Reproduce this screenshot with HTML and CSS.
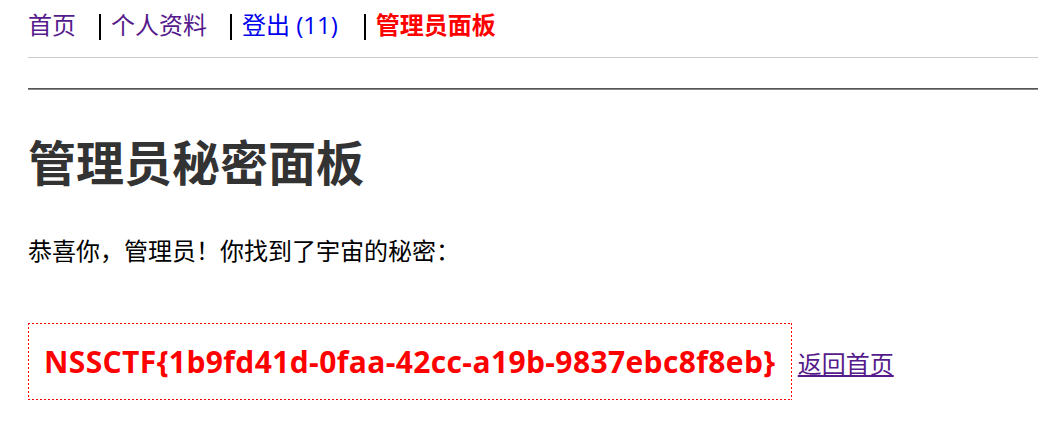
FILE: index.html
```html
<!DOCTYPE html>
<html lang="zh-CN">
<head>
<meta charset="utf-8">
<title>管理员面板</title>
<link rel="stylesheet" href="styles.css">
</head>
<body>
<nav class="nav">
  <a class="nav-link visited" href="#">首页</a><span class="sep" aria-hidden="true"></span><a class="nav-link visited" href="#">个人资料</a><span class="sep" aria-hidden="true"></span><a class="nav-link logout" href="#">登出 (11)</a><span class="sep" aria-hidden="true"></span><a class="nav-link active" href="#">管理员面板</a>
</nav>
<hr class="rule">
<h1 class="title">管理员秘密面板</h1>
<p class="lead">恭喜你，管理员！你找到了宇宙的秘密：</p>
<div class="secret-row">
  <span class="flag">NSSCTF{1b9fd41d-0faa-42cc-a19b-9837ebc8f8eb}</span> <a class="back" href="#">返回首页</a>
</div>
</body>
</html>
```
FILE: styles.css
```css
html, body {
  margin: 0;
  padding: 0;
  background: #fff;
}
body {
  padding-left: 28px;
  font-family: "Open Sans", "Noto Sans CJK SC", sans-serif;
  font-size: 24px;
  color: #000;
}
.nav {
  padding-top: 7px;
  padding-bottom: 14px;
  line-height: 36px;
  border-bottom: 1px solid #cccccc;
  white-space: nowrap;
}
.nav-link {
  text-decoration: none;
  color: #0000ee;
}
.nav-link.visited {
  color: #551a8b;
}
.nav-link.logout {
  margin-right: 3px;
}
.nav-link.active {
  color: #ff0000;
  font-weight: bold;
}
.sep {
  display: inline-block;
  width: 0;
  height: 26px;
  margin-left: 23px;
  margin-right: 10px;
  border-left: 2px solid #000;
  vertical-align: -6px;
}
.rule {
  margin: 30px 0 0 0;
  border: 0;
  border-top: 1px solid #555;
  border-bottom: 1px solid #888;
  height: 0;
}
.title {
  margin: 43px 0 0 0;
  font-size: 48px;
  line-height: 60px;
  font-weight: bold;
  color: #333;
}
.lead {
  margin: 40px 0 0 0;
  line-height: 36px;
}
.secret-row {
  margin-top: 54px;
  white-space: nowrap;
}
.flag {
  display: inline-block;
  padding: 16px;
  background:
    repeating-linear-gradient(90deg, #ff0000 0 2px, transparent 2px 4px) left top / 100% 1px no-repeat,
    repeating-linear-gradient(90deg, #ff0000 0 2px, transparent 2px 4px) left bottom / 100% 1px no-repeat,
    repeating-linear-gradient(180deg, #ff0000 0 2px, transparent 2px 4px) left top / 1px 100% no-repeat,
    repeating-linear-gradient(180deg, #ff0000 0 2px, transparent 2px 4px) right top / 1px 100% no-repeat;
  color: #ff0000;
  font-weight: bold;
  font-size: 30px;
  line-height: 45px;
  letter-spacing: 0.38px;
}
.back {
  color: #551a8b;
  text-decoration: underline;
}
```
